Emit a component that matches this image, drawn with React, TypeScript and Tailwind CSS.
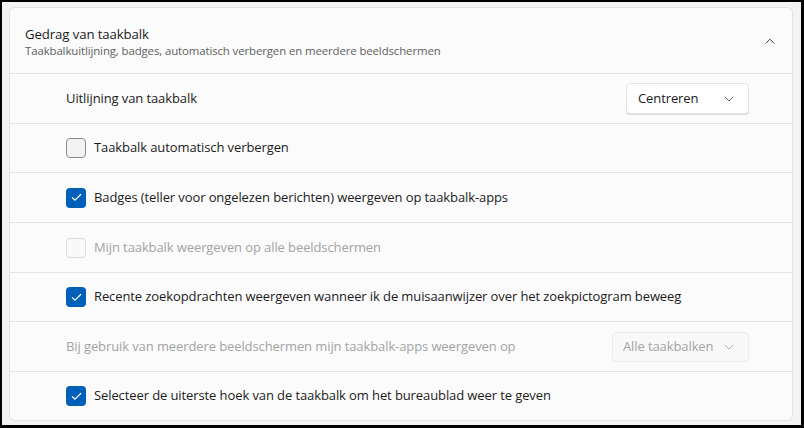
import React from "react";

const font = { fontFamily: '"Segoe UI", "Open Sans", "Noto Sans", sans-serif' };

function Chevron({ up = false, className = "" }: { up?: boolean; className?: string }) {
  return (
    <svg width="10" height="6" viewBox="0 0 10 6" className={className} fill="none">
      <path
        d={up ? "M1 5.2L5 1.2L9 5.2" : "M1 1L5 5L9 1"}
        stroke="currentColor"
        strokeWidth="1"
        strokeLinecap="round"
        strokeLinejoin="round"
      />
    </svg>
  );
}

type St = "on" | "off" | "disabled";

function Check({ state }: { state: St }) {
  if (state === "on") {
    return (
      <div className="flex h-[20px] w-[20px] shrink-0 items-center justify-center rounded-[4px] bg-[#005fb8]">
        <svg width="11" height="9" viewBox="0 0 11 9" fill="none">
          <path d="M1.3 4.6L4 7.2L9.7 1.5" stroke="white" strokeWidth="1.2" strokeLinecap="round" strokeLinejoin="round" />
        </svg>
      </div>
    );
  }
  if (state === "disabled") {
    return <div className="h-[20px] w-[20px] shrink-0 rounded-[4px] border border-[#dcdcdc] bg-[#f9f9f9]" />;
  }
  return <div className="h-[20px] w-[20px] shrink-0 rounded-[4px] border border-[#8a8a8a] bg-[#f3f3f3]" />;
}

function Row({ children, tall = true }: { children: React.ReactNode; tall?: boolean }) {
  return (
    <div
      className={
        tall
          ? "flex h-[50px] items-center border-t border-[#e5e5e5] pl-[56px] pr-[43px]"
          : "flex h-[49px] items-center border-t border-[#e5e5e5] pl-[56px] pr-[43px]"
      }
    >
      {children}
    </div>
  );
}

function CheckRow({ state, label, tall = true }: { state: St; label: string; tall?: boolean }) {
  return (
    <Row tall={tall}>
      <div className="flex items-center gap-[8px]">
        <Check state={state} />
        <span className={state === "disabled" ? "text-[#a3a3a3]" : "text-[#1b1b1b]"}>{label}</span>
      </div>
    </Row>
  );
}

export default function App() {
  return (
    <div
      className="box-border h-[428px] w-[804px] overflow-hidden border-t-2 border-l-2 border-r-[3px] border-b-[3px] border-black bg-[#f3f3f3] pl-[7px] pr-[8px] pt-[5px] text-[13px] tracking-[-0.1px]"
      style={font}
    >
      <div className="overflow-hidden rounded-[6px] border border-[#e3e3e3] bg-[#fbfbfb]">
        <div className="flex h-[65px] items-center pl-[15px] pr-[17px]">
          <div className="flex flex-1 flex-col pt-[1px]">
            <span className="text-[13.2px] leading-[18px] text-[#1b1b1b]">Gedrag van taakbalk</span>
            <span className="text-[11.4px] leading-[15px] text-[#5f5f5f]">
              Taakbalkuitlijning, badges, automatisch verbergen en meerdere beeldschermen
            </span>
          </div>
          <Chevron up className="text-[#3a3a3a]" />
        </div>
        <Row>
          <span className="flex-1 text-[#1b1b1b]">Uitlijning van taakbalk</span>
          <div className="flex h-[31px] w-[123px] items-center justify-between rounded-[4px] border border-[#e5e5e5] bg-white pl-[11px] pr-[14px] text-[#1b1b1b] shadow-[0_1px_0_#d9d9d9]">
            <span>Centreren</span>
            <Chevron className="text-[#6a6a6a]" />
          </div>
        </Row>
        <CheckRow state="off" label="Taakbalk automatisch verbergen" tall={false} />
        <CheckRow state="on" label="Badges (teller voor ongelezen berichten) weergeven op taakbalk-apps" />
        <CheckRow state="disabled" label="Mijn taakbalk weergeven op alle beeldschermen" />
        <CheckRow
          state="on"
          label="Recente zoekopdrachten weergeven wanneer ik de muisaanwijzer over het zoekpictogram beweeg"
          tall={false}
        />
        <Row>
          <span className="flex-1 text-[#a3a3a3]">
            Bij gebruik van meerdere beeldschermen mijn taakbalk-apps weergeven op
          </span>
          <div className="flex h-[30px] w-[137px] items-center justify-between rounded-[4px] border border-[#ececec] bg-[#f9f9f9] pl-[10px] pr-[14px] text-[#a3a3a3]">
            <span>Alle taakbalken</span>
            <Chevron className="text-[#b0b0b0]" />
          </div>
        </Row>
        <CheckRow state="on" label="Selecteer de uiterste hoek van de taakbalk om het bureaublad weer te geven" tall={false} />
      </div>
    </div>
  );
}
